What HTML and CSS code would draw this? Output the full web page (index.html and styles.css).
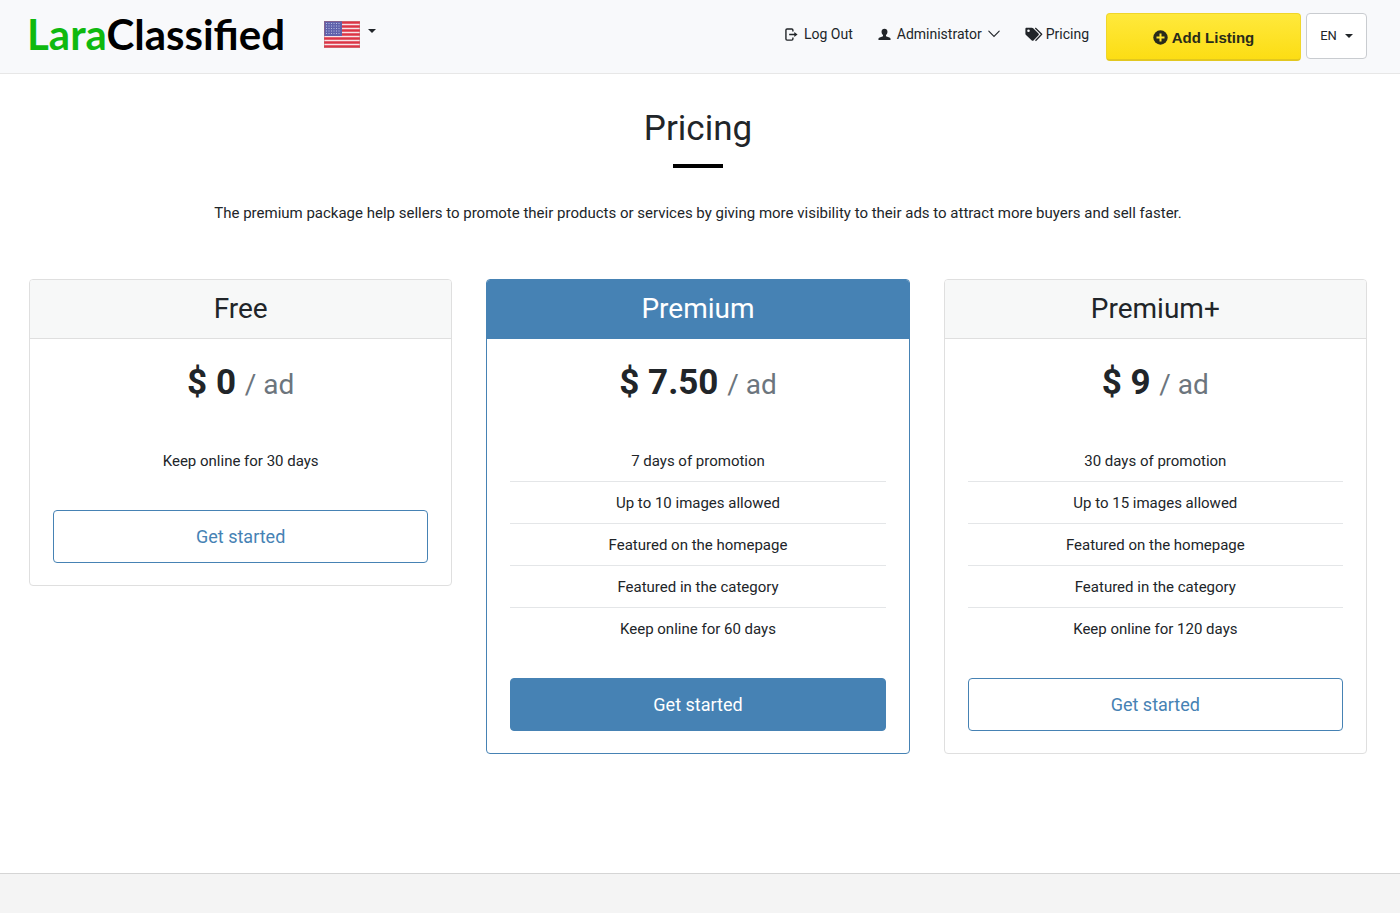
FILE: index.html
```html
<!DOCTYPE html>
<html lang="en">
<head>
<meta charset="utf-8">
<meta name="viewport" content="width=device-width, initial-scale=1">
<title>Pricing - LaraClassified</title>
<link rel="stylesheet" href="styles.css">
</head>
<body>
<header class="topbar">
  <a class="logo" href="#"><span class="logo-accent">Lara</span>Classified</a>
  <button class="country" type="button" aria-label="Select country">
    <svg class="flag" viewBox="0 0 36 27" width="36" height="27" aria-hidden="true">
      <rect width="36" height="27" fill="#f6e4e8"/>
      <path d="M0 1.5h36M0 5.5h36M0 9.5h36M0 13.5h36M0 17.5h36M0 21.5h36M0 25.5h36" stroke="#dc3545" stroke-width="2.4"/>
      <rect width="18" height="15" fill="#5f62ac"/>
      <path d="M2 2.5h15M2 5h15M2 7.500h15M2 10h15M2 12.500h15" stroke="#b9bce0" stroke-width="1" stroke-dasharray="1 1.500"/>
      <rect x=".5" y=".5" width="35" height="26" fill="none" stroke="#b66" stroke-opacity=".4"/>
    </svg>
    <span class="caret"></span>
  </button>
  <nav class="nav">
    <a class="nav-link" href="#">
      <svg width="13" height="13" viewBox="0 0 14 14" fill="none" stroke="currentColor" stroke-width="1.500" aria-hidden="true"><path d="M8.500 3.700V2.200Q8.500 1 7.300 1H2.200Q1 1 1 2.200v9.600Q1 13 2.200 13h5.100q1.200 0 1.200-1.200v-1.500M4.500 7H11"/><path d="M10 4.200 13.500 7 10 9.800z" fill="currentColor" stroke="none"/></svg>
      <span>Log Out</span>
    </a>
    <a class="nav-link" href="#">
      <svg width="13" height="13" viewBox="0 0 13 14" fill="currentColor" aria-hidden="true"><path d="M6.500.8C8.400.8 9.700 2 9.700 4c0 1.600-.7 2.800-1.600 3.500v1.300l3.600 1.500c.8.3 1.300.9 1.300 1.700v1H0v-1c0-.8.500-1.400 1.300-1.700l3.600-1.500V7.500C4 6.800 3.300 5.600 3.300 4c0-2 1.300-3.200 3.200-3.200z"/></svg>
      <span>Administrator</span>
      <svg width="12" height="8" viewBox="0 0 12 8" fill="none" stroke="currentColor" stroke-width="1.100" stroke-linecap="round" aria-hidden="true"><path d="m.8 1.200 5.200 5.300 5.200-5.300"/></svg>
    </a>
    <a class="nav-link tags" href="#">
      <svg width="18" height="15" viewBox="0 0 18 15" aria-hidden="true"><path fill="currentColor" fill-rule="evenodd" d="M1.500.8h5.400c.5 0 .9.200 1.300.5l5.300 5.200c.5.500.5 1.200 0 1.700l-5 5.200c-.5.500-1.200.5-1.700 0L1 8C.6 7.600.4 7.200.4 6.700V2c0-.7.400-1.200 1.100-1.200zM3.500 2.500a1.300 1.300 0 1 0 0 2.600 1.300 1.300 0 0 0 0-2.600z"/><path d="m10.300 1 6.400 6.200-6.200 6.500" fill="none" stroke="currentColor" stroke-width="1.300" stroke-linejoin="round"/></svg>
      <span>Pricing</span>
    </a>
  </nav>
  <a class="add-listing" href="#">
    <svg width="15" height="15" viewBox="0 0 15 15" aria-hidden="true"><circle cx="7.500" cy="7.500" r="7.200" fill="currentColor"/><path d="M7.500 3.500v8M3.500 7.500h8" stroke="#ffe52c" stroke-width="2"/></svg>
    <span>Add Listing</span>
  </a>
  <button class="language" type="button">EN <span class="caret"></span></button>
</header>
<main class="content">
  <h1 class="title">Pricing</h1>
  <p class="intro">The premium package help sellers to promote their products or services by giving more visibility to their ads to attract more buyers and sell faster.</p>
  <div class="plans">
    <section class="plan">
      <h2 class="plan-name">Free</h2>
      <div class="plan-body">
        <p class="price">$ 0 <span class="unit">/ ad</span></p>
        <ul class="features">
          <li>Keep online for 30 days</li>
        </ul>
        <a class="start" href="#">Get started</a>
      </div>
    </section>
    <section class="plan featured">
      <h2 class="plan-name">Premium</h2>
      <div class="plan-body">
        <p class="price">$ 7.50 <span class="unit">/ ad</span></p>
        <ul class="features">
          <li>7 days of promotion</li>
          <li>Up to 10 images allowed</li>
          <li>Featured on the homepage</li>
          <li>Featured in the category</li>
          <li>Keep online for 60 days</li>
        </ul>
        <a class="start" href="#">Get started</a>
      </div>
    </section>
    <section class="plan">
      <h2 class="plan-name">Premium+</h2>
      <div class="plan-body">
        <p class="price">$ 9 <span class="unit">/ ad</span></p>
        <ul class="features">
          <li>30 days of promotion</li>
          <li>Up to 15 images allowed</li>
          <li>Featured on the homepage</li>
          <li>Featured in the category</li>
          <li>Keep online for 120 days</li>
        </ul>
        <a class="start" href="#">Get started</a>
      </div>
    </section>
  </div>
</main>
<footer class="footer"></footer>
</body>
</html>
```

FILE: styles.css
```css
* { box-sizing: border-box; }

body {
  display: flex;
  flex-direction: column;
  min-height: 100vh;
  margin: 0;
  background: #fff;
  color: #212529;
  font: 15px/22px Roboto, "Liberation Sans", sans-serif;
}

h1, h2, p, ul { margin: 0; padding: 0; font-weight: 400; }
a { color: inherit; text-decoration: none; }
button { color: inherit; font: inherit; cursor: pointer; }

.topbar {
  display: flex;
  align-items: flex-start;
  padding: 13px 33px 12px 27px;
  background: #f8f9fb;
  border-bottom: 1px solid #e7e7e7;
}

.logo {
  color: #000;
  font: 700 42px/42px Lato, "Liberation Sans", sans-serif;
}
.logo-accent { color: #0fb90f; }

.country {
  display: flex;
  align-items: center;
  gap: 8px;
  margin-left: 39px;
  padding: 8px 0;
  border: 0;
  background: none;
}
.country .caret { margin-bottom: 8px; }

.caret {
  width: 0;
  height: 0;
  border: 4px solid transparent;
  border-top-color: currentColor;
  border-bottom: 0;
}

.nav {
  display: flex;
  gap: 25px;
  margin: 10px 17px 0 auto;
  font-size: 14px;
}
.nav-link { display: flex; align-items: center; gap: 6px; }
.tags { gap: 3px; }

.add-listing {
  display: flex;
  align-items: center;
  justify-content: center;
  gap: 4px;
  width: 195px;
  height: 48px;
  padding-top: 2px;
  margin-right: 5px;
  border: 1px solid #f0d62a;
  border-bottom: 2px solid #e2c71f;
  border-radius: 4px;
  background: linear-gradient(#ffe93c, #fcdd14);
  color: #292b1a;
  font: 700 15px/22px "Liberation Sans", Arial, sans-serif;
}

.language {
  display: flex;
  align-items: center;
  justify-content: center;
  gap: 8px;
  width: 61px;
  height: 46px;
  border: 1px solid #c9ccd0;
  border-radius: 4px;
  background: #fff;
  font-size: 13px;
}

.content {
  flex: 1;
  padding: 34px 33px 118px 29px;
  text-align: center;
}

.title { font-size: 35px; line-height: 42px; }
.title::after {
  content: "";
  display: block;
  width: 50px;
  height: 4px;
  margin: 14px auto 34px;
  background: #000;
}
.intro { margin-bottom: 55px; }

.plans {
  display: grid;
  grid-template-columns: repeat(3, 1fr);
  align-items: start;
  gap: 34px;
}

.plan {
  border: 1px solid #dfdfdf;
  border-radius: 4px;
  overflow: hidden;
}
.plan-name {
  padding: 12px 16px;
  border-bottom: 1px solid #dfdfdf;
  background: #f7f8f8;
  font-size: 28px;
  line-height: 34px;
}
.featured { border-color: #4682b4; }
.featured .plan-name {
  border-color: #4682b4;
  background: #4682b4;
  color: #fff;
}

.plan-body { padding: 23px 23px 22px; }
.price { font-size: 35px; font-weight: 700; line-height: 42px; }
.unit { color: #6c757d; font-size: 28px; font-weight: 400; }

.features { margin: 34px 0 28px; list-style: none; }
.features li { padding: 10px 0 9px; border-bottom: 1px solid #e4e6e8; line-height: 22px; }
.features li:last-child { border-color: transparent; }

.start {
  display: block;
  padding: 13px 16px;
  border: 1px solid #4682b4;
  border-radius: 4px;
  color: #4682b4;
  font-size: 18px;
  line-height: 25px;
}
.featured .start { background: #4682b4; color: #fff; }

.footer {
  height: 40px;
  border-top: 1px solid #d5d5d5;
  background: #f4f4f4;
}
```
